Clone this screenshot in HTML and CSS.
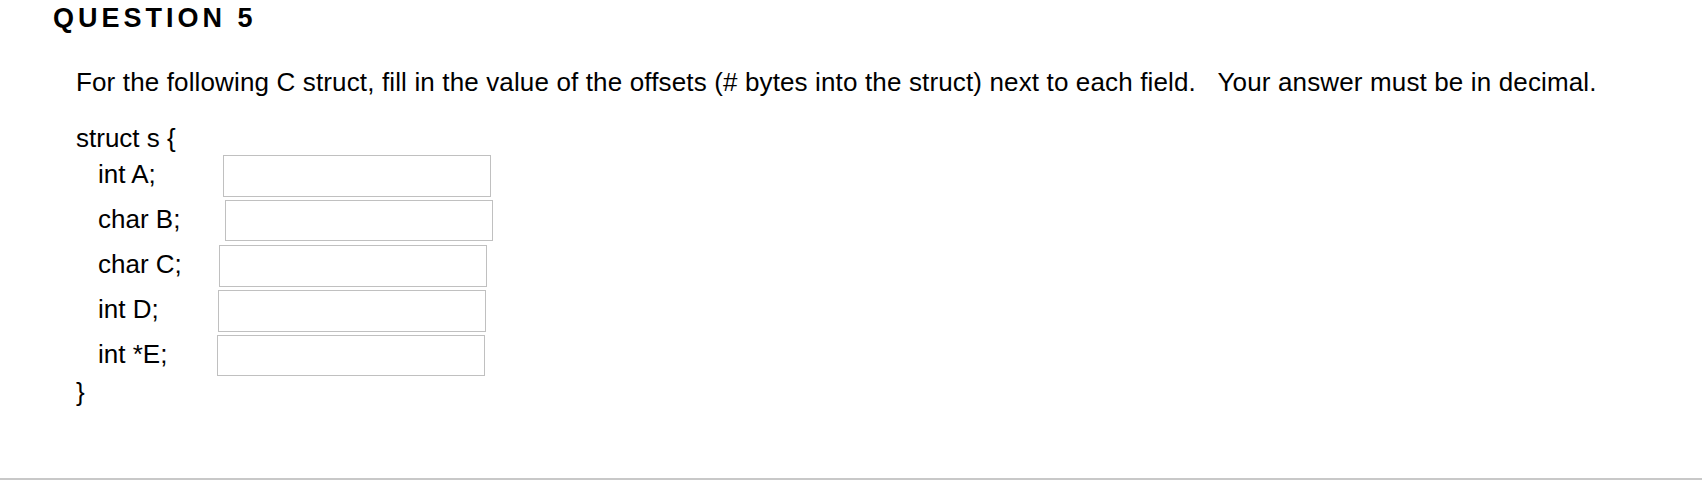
FILE: index.html
```html
<!DOCTYPE html>
<html>
<head>
<meta charset="utf-8">
<link rel="stylesheet" href="styles.css">
</head>
<body>
<div class="question">
  <h2 class="q-title">QUESTION 5</h2>
  <div class="q-body">
    <p class="prompt">For the following C struct, fill in the value of the offsets (# bytes into the struct) next to each field. &nbsp; Your answer must be in decimal.</p>
    <div class="code">
      <div class="code-line">struct s {</div>
      <div class="field f1"><span class="label">int A;</span><input class="answer" type="text"></div>
      <div class="field f2"><span class="label">char B;</span><input class="answer" type="text"></div>
      <div class="field f3"><span class="label">char C;</span><input class="answer" type="text"></div>
      <div class="field f4"><span class="label">int D;</span><input class="answer" type="text"></div>
      <div class="field f5"><span class="label">int *E;</span><input class="answer" type="text"></div>
      <div class="code-line closing">}</div>
    </div>
  </div>
</div>
</body>
</html>
```
FILE: styles.css
```css
html, body {
  margin: 0;
  padding: 0;
  background: #fff;
}
body {
  font-family: "Liberation Sans", Arial, sans-serif;
  color: #000;
  width: 1702px;
  height: 480px;
  overflow: hidden;
}
.question {
  height: 480px;
  border-bottom: 2px solid #c8c8c8;
  box-sizing: border-box;
}
.q-title {
  margin: 0;
  padding: 2px 0 0 53px;
  font-size: 27px;
  font-weight: bold;
  letter-spacing: 4px;
  line-height: 32px;
}
.q-body {
  padding-left: 76px;
}
.prompt {
  margin: 33px 0 0 0;
  font-size: 26px;
  line-height: 30px;
  letter-spacing: 0.14px;
}
.code {
  margin-top: 27px;
  font-size: 26px;
}
.code-line {
  line-height: 28px;
}
.closing {
  margin-top: 1px;
}
.field {
  display: flex;
  align-items: flex-start;
  height: 42px;
  margin-top: 3px;
}
.label {
  width: 147px;
  padding: 4px 0 0 22px;
  line-height: 30px;
  box-sizing: border-box;
}
.answer {
  width: 268px;
  height: 42px;
  box-sizing: border-box;
  border: 1px solid #c0c0c0;
  margin: 0;
  padding: 0;
  background: #fff;
}
.f2 .answer { margin-left: 2px; height: 41px; }
.f3 .answer { margin-left: -4px; }
.f4 .answer { margin-left: -5px; }
.f5 .answer { margin-left: -6px; height: 41px; }
```
